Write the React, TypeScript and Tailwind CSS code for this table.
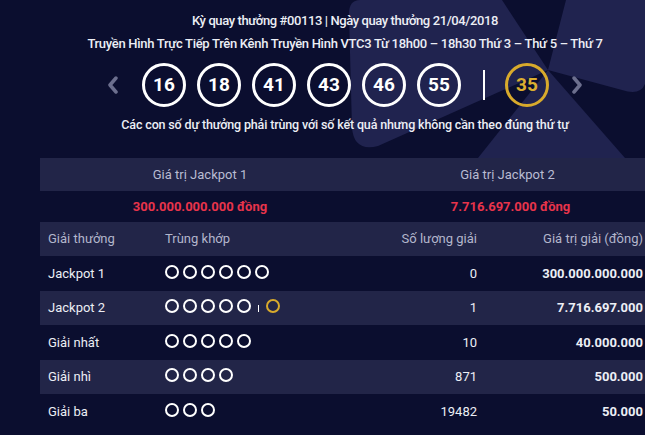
import React from 'react'

const MAIN = [16, 18, 41, 43, 46, 55]

type Row = {
  name: string
  white: number
  bonus?: boolean
  count: string
  value: string
}

const ROWS: Row[] = [
  { name: 'Jackpot 1', white: 6, count: '0', value: '300.000.000.000' },
  { name: 'Jackpot 2', white: 5, bonus: true, count: '1', value: '7.716.697.000' },
  { name: 'Giải nhất', white: 5, count: '10', value: '40.000.000' },
  { name: 'Giải nhì', white: 4, count: '871', value: '500.000' },
  { name: 'Giải ba', white: 3, count: '19482', value: '50.000' },
]

function Chevron({ dir }: { dir: 'left' | 'right' }) {
  return (
    <svg width="12" height="18" viewBox="0 0 12 18" className="shrink-0">
      <polyline
        points={dir === 'left' ? '9,2 3,9 9,16' : '3,2 9,9 3,16'}
        fill="none"
        stroke="#6c6f8e"
        strokeWidth="3.5"
        strokeLinecap="round"
        strokeLinejoin="round"
      />
    </svg>
  )
}

function Ball({ n, gold }: { n: number; gold?: boolean }) {
  return (
    <div
      className={`flex h-[44px] w-[44px] shrink-0 items-center justify-center rounded-full border-[3px] text-[19px] font-bold ${
        gold ? 'border-[#d8aa2c] text-[#dcae30]' : 'border-white text-white'
      }`}
    >
      {n}
    </div>
  )
}

function Dot({ gold }: { gold?: boolean }) {
  return (
    <span
      className={`inline-block h-[14px] w-[14px] rounded-full border-2 ${
        gold ? 'border-[#d8aa2c]' : 'border-white'
      }`}
    />
  )
}

function Blades() {
  return (
    <svg
      className="pointer-events-none absolute left-0 top-0"
      width="645"
      height="158"
      viewBox="0 0 645 158"
    >
      <g fill="#20234f">
        {/* upper-left blade */}
        <path d="M548 70 L502 0 L360 0 Q349 0 349 14 L352 128 Q354 152 378 146 Z" />
        {/* right blade */}
        <path d="M548 70 L566 0 L645 0 L645 84 Q640 96 622 90 Z" />
        {/* lower blade */}
        <path d="M548 70 L625 158 L478 158 Z" />
      </g>
    </svg>
  )
}

export default function App() {
  return (
    <div className="relative h-[435px] w-[645px] overflow-hidden bg-[#0b0e2f] font-['Roboto',sans-serif]">
      <Blades />

      <div className="relative">
        {/* heading */}
        <div className="pl-[45px] pt-[12px] text-center text-[13px] font-medium text-[#eceef5]">
          <p className="leading-[18px] tracking-[-0.4px]">
            Kỳ quay thưởng #00113 | Ngày quay thưởng 21/04/2018
          </p>
          <p className="mt-[5px] leading-[18px] tracking-[-0.3px]">
            Truyền Hình Trực Tiếp Trên Kênh Truyền Hình VTC3 Từ 18h00 – 18h30 Thứ 3 – Thứ 5 – Thứ 7
          </p>
        </div>

        {/* balls */}
        <div className="mt-[10px] flex items-center pl-[107px]">
          <Chevron dir="left" />
          <div className="ml-[23px] flex gap-[11px]">
            {MAIN.map((n) => (
              <Ball key={n} n={n} />
            ))}
          </div>
          <span className="ml-[22px] h-[30px] w-[2px] bg-white" />
          <div className="ml-[20px]">
            <Ball n={35} gold />
          </div>
          <div className="ml-[22px]">
            <Chevron dir="right" />
          </div>
        </div>

        <p className="mt-[10px] pl-[45px] text-center text-[12.5px] font-medium leading-[16px] tracking-[-0.15px] text-[#eceef5]">
          Các con số dự thưởng phải trùng với số kết quả nhưng không cần theo đúng thứ tự
        </p>

        {/* jackpot summary */}
        <div className="ml-[40px] mt-[25px] w-[605px]">
          <div className="grid h-[33px] grid-cols-[320px_1fr] items-center bg-[#222548] text-center text-[13px] text-[#b9bcd2]">
            <span>Giá trị Jackpot 1</span>
            <span className="pl-[10px]">Giá trị Jackpot 2</span>
          </div>
          <div className="grid h-[31px] grid-cols-[320px_1fr] items-center text-center text-[13px] font-bold text-[#e8344b]">
            <span>300.000.000.000 đồng</span>
            <span className="pl-[16px]">7.716.697.000 đồng</span>
          </div>

          {/* prize table */}
          <div className="grid h-[34px] grid-cols-[125px_212px_100px_168px] items-center bg-[#222548] text-[13px] text-[#b3b6cc]">
            <span className="pl-[8px]">Giải thưởng</span>
            <span>Trùng khớp</span>
            <span className="text-right">Số lượng giải</span>
            <span className="pr-[2px] text-right">Giá trị giải (đồng)</span>
          </div>

          {ROWS.map((r, i) => (
            <div
              key={r.name}
              className={`grid h-[34.5px] grid-cols-[125px_212px_100px_168px] items-center text-[13px] text-[#eceef5] ${
                i % 2 === 1 ? 'bg-[#222548]' : ''
              }`}
            >
              <span className="pl-[8px]">{r.name}</span>
              <div className="flex items-center gap-[4px] pb-[3px]">
                {Array.from({ length: r.white }).map((_, k) => (
                  <Dot key={k} />
                ))}
                {r.bonus && (
                  <>
                    <span className="mx-[3px] mt-[4px] h-[7px] w-[1px] bg-white" />
                    <Dot gold />
                  </>
                )}
              </div>
              <span className="text-right">{r.count}</span>
              <span className="pr-[2px] text-right font-bold">{r.value}</span>
            </div>
          ))}
        </div>
      </div>
    </div>
  )
}
